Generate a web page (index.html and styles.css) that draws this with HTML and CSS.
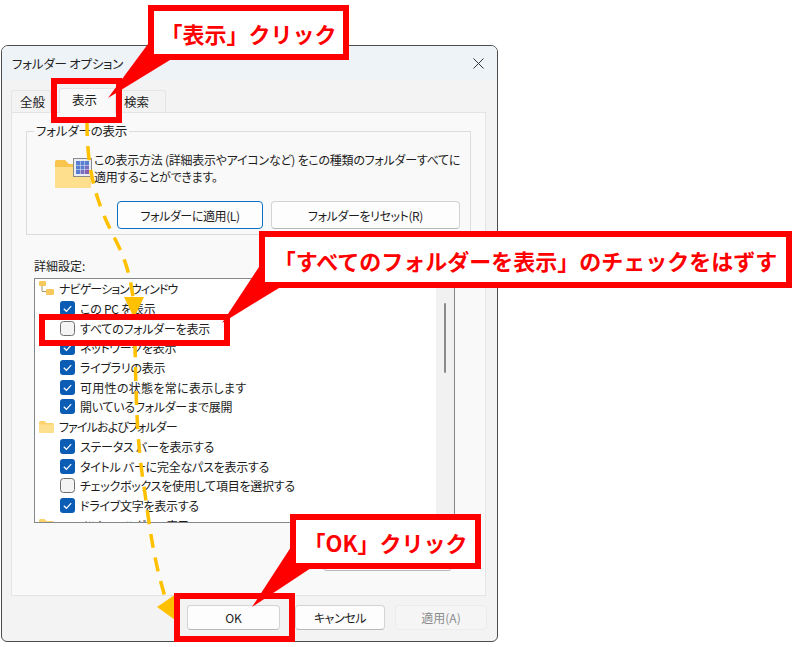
FILE: index.html
```html
<!DOCTYPE html>
<html lang="ja">
<head>
<meta charset="utf-8">
<title>フォルダー オプション</title>
<link rel="stylesheet" href="styles.css">
</head>
<body>
<svg class="defs" width="0" height="0" aria-hidden="true">
  <defs>
    <symbol id="on" viewBox="0 0 15 15"><rect x="0" y="0" width="15" height="15" rx="3" fill="#0b5cb5"/><path d="M3.8 7.8l2.6 2.5 4.8-5.2" fill="none" stroke="#fff" stroke-width="1.2"/></symbol>
    <symbol id="off" viewBox="0 0 15 15"><rect x=".5" y=".5" width="14" height="14" rx="3" fill="#f4f4f4" stroke="#6e6e6e"/></symbol>
    <symbol id="fold" viewBox="0 0 15 12"><path d="M0 1.5Q0 0 1.5 0h4L7.500 2H13.500Q15 2 15 3.500V10.500Q15 12 13.500 12H1.500Q0 12 0 10.500Z" fill="#fbd36a"/><path d="M0 3.500H15V10.500Q15 12 13.500 12H1.500Q0 12 0 10.500Z" fill="#fde08e"/></symbol>
    <symbol id="tree" viewBox="0 0 15 15"><path d="M3 4V10.500H8" fill="none" stroke="#a99566"/><rect x="0" y="0" width="7" height="5" rx="1" fill="#f6c95c"/><rect x="7" y="8" width="8" height="6" rx="1" fill="#f6c95c"/></symbol>
  </defs>
</svg>
<main class="window">
  <header class="titlebar">
    <span class="title">フォルダー オプション</span>
    <svg class="close" width="11" height="11" viewBox="0 0 11 11"><path d="M.5.5l10 10M10.500.5l-10 10" stroke="#333" fill="none"/></svg>
  </header>
  <nav class="tabs">
    <span class="tab">全般</span>
    <span class="tab selected">表示</span>
    <span class="tab">検索</span>
  </nav>
  <section class="panel">
    <fieldset class="group">
      <legend>フォルダーの表示</legend>
      <div class="views">
        <svg class="bigicon" width="37" height="30" viewBox="0 0 37 30">
          <path d="M0 4Q0 2 2 2H10L14 6H34Q36 6 36 8V28Q36 30 34 30H2Q0 30 0 28Z" fill="#f8c64f"/>
          <path d="M0 9H36V28Q36 30 34 30H2Q0 30 0 28Z" fill="#fddf8e"/>
          <rect x="18.500" y=".5" width="18" height="18" fill="#e9eef5" stroke="#8a8a8a"/>
          <g fill="#5a7fd0"><rect x="21" y="3" width="4" height="4"/><rect x="25.500" y="3" width="4" height="4"/><rect x="30" y="3" width="4" height="4"/><rect x="21" y="7.500" width="4" height="4"/><rect x="25.500" y="7.500" width="4" height="4"/><rect x="30" y="7.500" width="4" height="4" fill="#7a6fc0"/><rect x="21" y="12" width="4" height="4"/><rect x="25.500" y="12" width="4" height="4" fill="#7a6fc0"/><rect x="30" y="12" width="4" height="4" fill="#8a5fb0"/></g>
        </svg>
        <p class="desc">この表示方法 (詳細表示やアイコンなど) をこの種類のフォルダーすべてに<br>適用することができます。</p>
      </div>
      <div class="viewbtns">
        <button class="btn apply-folder">フォルダーに適用(L)</button>
        <button class="btn reset-folder">フォルダーをリセット(R)</button>
      </div>
    </fieldset>
    <div class="adv-label">詳細設定:</div>
    <div class="list">
      <ul class="rows">
        <li class="row head"><svg class="ico"><use href="#tree"/></svg>ナビゲーション ウィンドウ</li>
        <li class="row"><svg class="cb"><use href="#on"/></svg>この PC を表示</li>
        <li class="row"><svg class="cb"><use href="#off"/></svg>すべてのフォルダーを表示</li>
        <li class="row"><svg class="cb"><use href="#on"/></svg>ネットワークを表示</li>
        <li class="row"><svg class="cb"><use href="#on"/></svg>ライブラリの表示</li>
        <li class="row wide"><svg class="cb"><use href="#on"/></svg>可用性の状態を常に表示します</li>
        <li class="row"><svg class="cb"><use href="#on"/></svg>開いているフォルダーまで展開</li>
        <li class="row head"><svg class="ico folder"><use href="#fold"/></svg>ファイルおよびフォルダー</li>
        <li class="row"><svg class="cb"><use href="#on"/></svg>ステータス バーを表示する</li>
        <li class="row"><svg class="cb"><use href="#on"/></svg>タイトル バーに完全なパスを表示する</li>
        <li class="row"><svg class="cb"><use href="#off"/></svg>チェックボックスを使用して項目を選択する</li>
        <li class="row"><svg class="cb"><use href="#on"/></svg>ドライブ文字を表示する</li>
        <li class="row head"><svg class="ico folder"><use href="#fold"/></svg>ファイルとフォルダーの表示</li>
      </ul>
      <div class="scroll"><span class="thumb"></span></div>
    </div>
    <div class="defaults"><button class="btn restore" aria-label="既定値に戻す"></button></div>
  </section>
  <footer class="footer">
    <button class="btn action ok">OK</button>
    <button class="btn action cancel">キャンセル</button>
    <button class="btn action disabled">適用(A)</button>
  </footer>
</main>

<svg class="overlay" width="796" height="647" viewBox="0 0 796 647" aria-hidden="true">
  <g class="dash">
    <path d="M87 122C87 160 92 185 103 213S128 255 133 298"/>
    <path d="M135 343C136 400 137 440 143 480S152 555 166 600"/>
  </g>
  <g fill="#ffc000">
    <polygon points="124,297 144,297 134,318"/>
    <polygon points="157,607 176,594 178,622"/>
  </g>
  <g fill="#ff0000">
    <polygon points="148,44 108,98 170,60"/>
    <polygon points="259,267 222,323 279,288"/>
    <polygon points="291,547 252,607 311,568"/>
  </g>
</svg>
<div class="frame frame-tab"></div>
<div class="frame frame-row"></div>
<div class="frame frame-ok"></div>
<div class="callout call-tab">「表示」クリック</div>
<div class="callout call-row">「すべてのフォルダーを表示」のチェックをはずす</div>
<div class="callout call-ok">「OK」クリック</div>
</body>
</html>
```

FILE: styles.css
```css
* { box-sizing: border-box; }
html, body { margin: 0; padding: 0; background: #fff; }
body {
  width: 796px; height: 647px; position: relative; overflow: hidden;
  font-family: "Noto Sans CJK JP", "Noto Sans", sans-serif;
  font-size: 12px; color: #1c1c1c; font-feature-settings: "palt";
  padding: 45px 0 0 1px;
}
.defs { position: absolute; }
.window {
  width: 497px; height: 597px; display: flex; flex-direction: column;
  background: #f3f3f3; border: 1px solid #4c4c4c; border-radius: 7px 7px 6px 6px; overflow: hidden;
}
.titlebar {
  height: 34px; flex: none; display: flex; align-items: center; justify-content: space-between;
  padding: 0 13px 0 10px; background: #eef3f8;
}
.title { font-size: 12.5px; color: #222; letter-spacing: -.2px; }
.tabs { display: flex; height: 32px; flex: none; padding: 10px 0 0 9px; align-items: flex-end; }
.tab {
  height: 22px; padding: 0 0 0 8px; line-height: 21px; background: #f3f3f3; font-size: 12.5px; white-space: nowrap;
  border: 1px solid #e4e4e4; border-bottom: 0; border-radius: 3px 3px 0 0; margin-right: 8px; width: 40px;
}
.tab:last-child { width: 51px; margin: 0 0 0 -3px; padding-left: 8px; }
.tab.selected { width: 57px; height: 25px; background: #f9f9f9; margin: 0 2px 0 0; padding: 0 0 0 12px; position: relative; top: 1px; line-height: 22px; }
.panel {
  width: 475px; height: 484px; margin-left: 9px; flex: none; background: #f9f9f9;
  border: 1px solid #e4e4e4; padding: 11px 14px 0 14px;
}
.group {
  margin: 0; width: 445px; height: 111px; padding: 0; border: 1px solid #dcdcdc; min-width: 0;
  display: flex; flex-direction: column;
}
.group legend { padding: 0 2px; margin-left: 7px; font-size: 12.5px; line-height: 14px; color: #222; letter-spacing: -.2px; }
.views { display: flex; height: 58px; padding: 14px 0 0 28px; }
.bigicon { flex: none; margin-top: 6px; }
.desc { margin: 0 0 0 2px; font-size: 12px; line-height: 16.5px; white-space: nowrap; letter-spacing: -.25px; }
.viewbtns { display: flex; gap: 8px; padding: 0 0 0 90px; margin-top: 5px; }
.btn {
  font: inherit; font-feature-settings: "palt"; color: #1c1c1c; background: #fdfdfd; height: 28px; padding: 0;
  border: 1px solid #d3d3d3; border-bottom-color: #b8b8b8; border-radius: 4px; letter-spacing: -.4px;
}
.apply-folder { width: 146px; border: 1.5px solid #0b6fc4; }
.reset-folder { width: 189px; }
.adv-label { margin: 24px 0 0 8px; line-height: 14px; font-size: 12px; }
.list {
  width: 421px; height: 245px; margin: 5px 0 0 8px; background: #fff; border: 1px solid #83888d;
  display: flex; overflow: hidden;
}
.rows { list-style: none; margin: 0; padding: 0; flex: 1; min-width: 0; }
.row { height: 19.7px; display: flex; align-items: center; padding-left: 25px; white-space: nowrap; font-size: 12px; letter-spacing: -.25px; }
.row.wide { letter-spacing: .3px; }
.row.head { padding-left: 4px; letter-spacing: -.9px; }
.cb { width: 15px; height: 15px; margin-right: 5px; flex: none; }
.ico { width: 15px; height: 15px; margin-right: 5px; flex: none; }
.ico.folder { height: 12px; }
.scroll { width: 18px; flex: none; background: #f1f1f1; display: flex; justify-content: center; padding-top: 24px; }
.thumb { width: 2px; height: 70px; background: #8a8a8a; border-radius: 1px; }
.defaults { display: flex; justify-content: flex-end; padding: 22px 19px 0 0; }
.restore { width: 129px; height: 26px; }
.footer { display: flex; padding: 9px 9px 0 185px; gap: 15px; height: 45px; }
.action { width: 93px; height: 25px; letter-spacing: 0; }
.action.cancel { width: 90px; letter-spacing: -.4px; }
.action.disabled { margin-left: -5px; width: 92px; color: #8c8c8c; background: #f5f5f5; border-color: #ececec; }
.overlay { position: absolute; left: 0; top: 0; }
.dash path { fill: none; stroke: #ffc000; stroke-width: 3.5; stroke-dasharray: 14 10; }
.frame { position: absolute; border: 6px solid #f00; }
.frame-tab { left: 51px; top: 78px; width: 71px; height: 45px; }
.frame-row { left: 39px; top: 314px; width: 191px; height: 32px; }
.frame-ok { left: 174px; top: 593px; width: 121px; height: 49px; }
.callout {
  position: absolute; background: #fff; border: 6px solid #f00; color: #f00;
  font-weight: 700; font-size: 22px; line-height: 1; display: flex; align-items: center; justify-content: center;
  white-space: nowrap; font-feature-settings: normal;
}
.call-tab { left: 148px; top: 5px; width: 201px; height: 55px; }
.call-row { left: 259px; top: 231px; width: 533px; height: 57px; }
.call-ok { left: 290px; top: 514px; width: 191px; height: 55px; }
```
